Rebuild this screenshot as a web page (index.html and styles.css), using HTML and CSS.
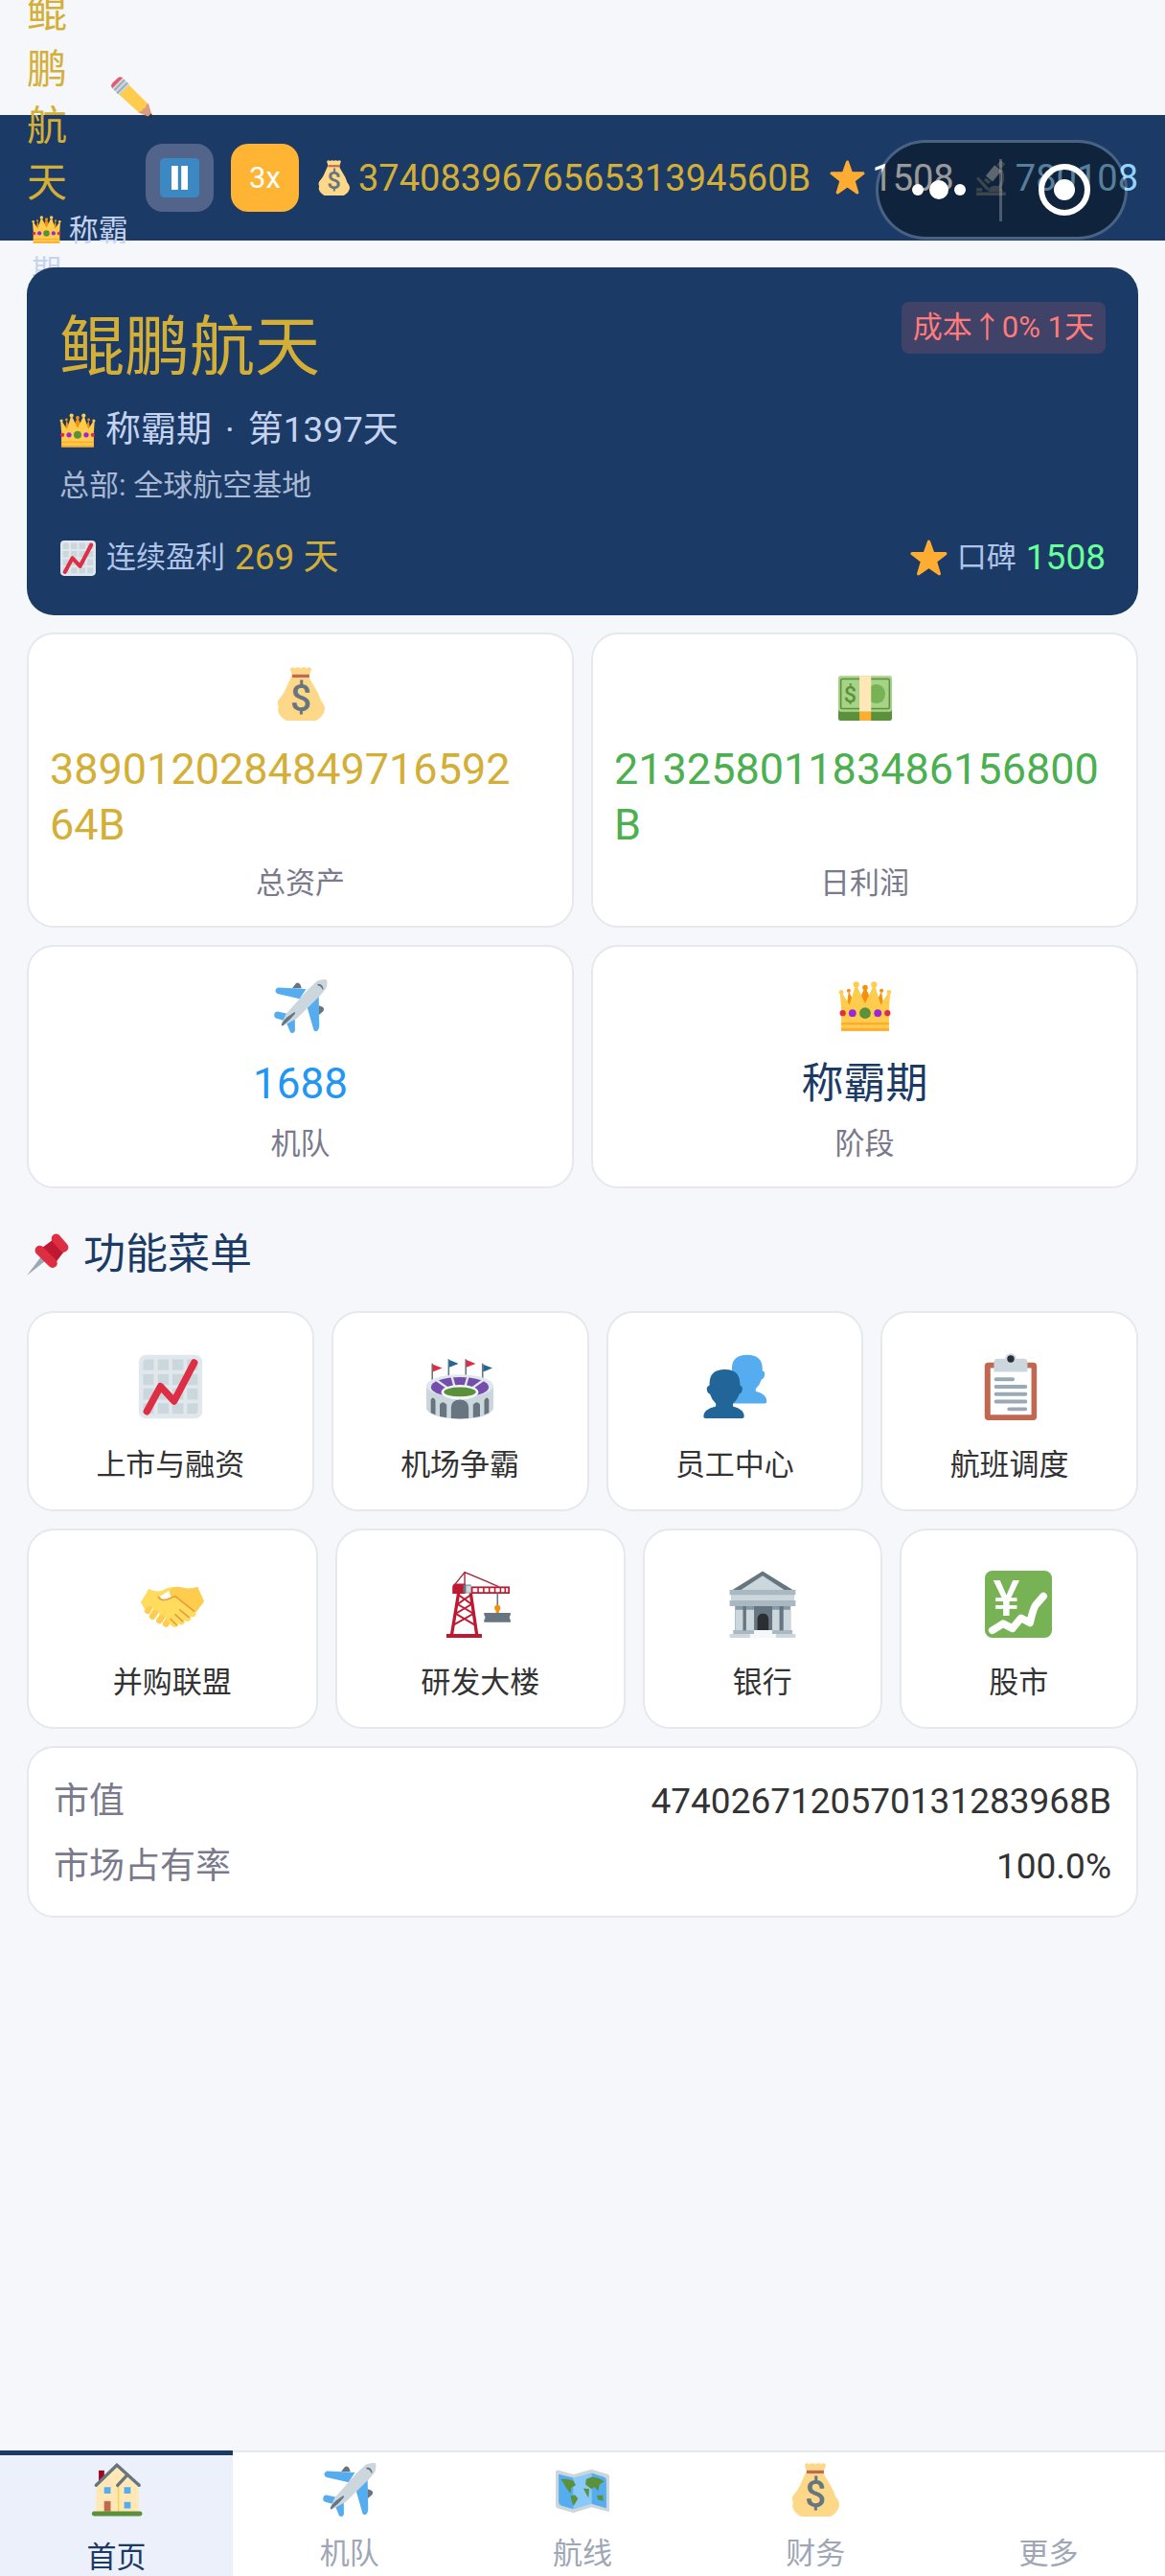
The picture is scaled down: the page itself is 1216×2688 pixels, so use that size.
FILE: index.html
```html
<!DOCTYPE html>
<html lang="zh-CN">
<head>
    <meta charset="UTF-8">
    <meta name="viewport" content="width=device-width, initial-scale=1.0">
    <title>鲲鹏航天</title>
    <link rel="stylesheet" href="styles.css">
</head>
<body>

    <!-- Icon sprite -->
    <svg class="sprite" aria-hidden="true">
        <symbol id="i-bag" viewBox="0 0 36 36">
            <path fill="#fdd888" d="M12 5.5 10.8 1.2Q12.5-.6 14 .9 16-.5 18 .8 20-.5 22 .9q1.5-1.5 3.2.3L23.8 5.5v2l5.5 9.5q1.4 3 2.2 5.5 3.5 4 2.3 7-1 4-5.8 6.5H8.200Q3 33 2.700 29q0-1.5.4-2.5-1.7-3.5 1.100-6Q6.5 18 8 14.5z"/>
            <path fill="#bf6952" d="M12.2 5h11.5v2.1H12.2z"/>
            <text class="glyph-bag" x="18" y="29.5">$</text>
        </symbol>
        <symbol id="i-star" viewBox="0 0 36 36">
            <path fill="#ffac33" stroke="#ffac33" stroke-width="3" stroke-linejoin="round" d="m18 2 4 11.5h12l-9.6 7.5 3.6 12L18 26 8 33l3.6-12L2 13.5h12z"/>
        </symbol>
        <symbol id="i-crown" viewBox="0 0 36 36">
            <path fill="#f4900c" d="m5 22 2-14 5 10 6-13 6 13 5-10 2 14z"/>
            <circle cx="7" cy="7.5" r="1.3" fill="#f4900c"/>
            <circle cx="18" cy="5.5" r="1.8" fill="#f4900c"/>
            <circle cx="29" cy="7.5" r="1.3" fill="#f4900c"/>
            <path fill="#ffcc4d" d="M2 34.5V20L1.2 9.5h1.6L7.5 17 11.2 5h1.6L18 16l5.2-11h1.6L28.5 17l4.7-7.5h1.6L34 20v14.5z"/>
            <circle cx="2" cy="8.5" r="1.5" fill="#ffcc4d"/>
            <circle cx="12" cy="3.5" r="2" fill="#ffcc4d"/>
            <circle cx="24" cy="3.5" r="2" fill="#ffcc4d"/>
            <circle cx="34" cy="8.5" r="1.5" fill="#ffcc4d"/>
            <path fill="#ffac33" d="M2 29h32v1.5H2zM2 32.6h32v2H2z"/>
            <circle cx="3" cy="22.6" r="2" fill="#dd2e44"/>
            <circle cx="33" cy="22.6" r="2" fill="#dd2e44"/>
            <circle cx="9.5" cy="22.6" r="2.5" fill="#9c26d8"/>
            <circle cx="26.5" cy="22.6" r="2.5" fill="#9c26d8"/>
            <circle cx="18" cy="22.6" r="3.8" fill="#5c913b"/>
        </symbol>
        <symbol id="i-chart" viewBox="-1 -1 38 38">
            <rect width="36" height="36" rx="4" fill="#e1e8ed"/>
            <path fill="#ccd6dd" d="M2.5 4.5q0-2 2-2h4v6.2h-6zM10.8 2.5h6.2v6.2h-6.2zM19 2.5h6.3v6.2H19zM27.4 2.5h4q2 0 2 2v4.2h-6zM2.5 10.8h6V17h-6zM10.8 10.8H17V17h-6.2zM19 10.8h6.3V17H19zM27.4 10.8h6V17h-6zM2.5 19h6v6.3h-6zM10.8 19H17v6.3h-6.2zM19 19h6.3v6.3H19zM27.4 19h6v6.3h-6zM2.5 27.4h6v6h-4q-2 0-2-2zM10.8 27.4H17v6h-6.2zM19 27.4h6.3v6H19zM27.4 27.4h6v4q0 2-2 2h-4z"/>
            <path fill="none" stroke="#dd2e44" stroke-width="4" stroke-linecap="round" stroke-linejoin="round" d="M4.6 32 12.3 17.8l7.7 8.4L31.4 4.4"/>
        </symbol>
        <symbol id="i-plane" viewBox="0 0 36 36">
            <path fill="#66757f" d="m12.2 6 2.5-3.2q1.5-1.3 3 .7l.8 2.5zM30 17.5l2.3.8q2 1.2.7 3L30 24z"/>
            <path fill="#55acee" d="M1 8q-.2-2 2-2.600l18.500 1-4.3 6.6L2.5 9.6Q1.2 9.200 1 8zM30 11l.4 20q-.2 3-1.8 3.700-1.6.2-2-1l-4.3-15zM.1 24q.2-2.4 2.3-2.5l6.5 1.5-2.6 4.5-5-1.5Q0 25.5.1 24zM14 26l.1 8q-.3 1.9-1.9 2-1.2 0-1.6-1.5L8.3 29z"/>
            <path fill="#ccd6dd" d="M29 1q3-1.3 6.3-.9.9 3-.5 6.1l-3.6 4.4L15.5 26 6.2 31.2 4.9 30.3l3-6.8L21.5 8z"/>
            <path fill="#66757f" d="M29.2 3q3.6-.3 4 3.6l-.8.2q-.8-2.6-3.2-2.8zM5 30.8q0-2 3.5-5.3l5-3.5q1.3 0 .4 1.3-3 4-8.3 7.8z"/>
        </symbol>
        <symbol id="i-cash" viewBox="0 0 36 36">
            <path fill="#5c913b" d="M0 26h36v8.5q0 1.5-1.5 1.5h-33Q0 36 0 34.5z"/>
            <rect y="6" width="36" height="24" rx="1.5" fill="#a6d388"/>
            <rect x="1.7" y="8" width="32.6" height="20" rx="1" fill="none" stroke="#5c913b"/>
            <ellipse cx="25.5" cy="18" rx="6" ry="6.5" fill="#77b255"/>
            <text class="glyph-cash" x="8" y="23.5">$</text>
            <path fill="#ffe8b6" d="M14.2 6H22v24h-7.8z"/>
            <path fill="#ffac33" d="M14.2 30H22v6h-7.8z"/>
        </symbol>
        <symbol id="i-pin" viewBox="0 0 36 36">
            <path fill="#99aab5" d="M0 36 12.5 19.5l4 3.5z"/>
            <path fill="#be1931" d="m12 13 12-9 9 10-10 13z"/>
            <path fill="none" stroke="#dd2e44" stroke-width="8" stroke-linecap="round" d="m25 4.5 6.5 7.5M11 14.5l11 11"/>
        </symbol>
        <symbol id="i-pencil" viewBox="0 0 36 36">
            <path fill="#ffcc4d" d="m14 6 17.8 17.5L34 31l-10.5-.5L6 14.5z"/>
            <path fill="#d99e82" d="m31.8 22.8 3.7 12.5-12.3-4.6q1-1.3 3-1.5.5-2.3 3-2.7.3-2.6 2.600-3.700z"/>
            <path fill="#292f33" d="m34.5 31.5 1.3 4.3-4.3-1.4q1-2 3-2.9z"/>
            <path fill="#ea596e" d="M1.2 10Q-1 8 1 5.5L5.500 1.2Q8-.8 10 1.2z"/>
            <path fill="#ccd6dd" d="m9.8 1 5.900 5.800-9 9L1 10z"/>
            <path stroke="#99aab5" stroke-width="1.4" d="M11.5 2.8 2.7 11.5M14 5.2l-9 9"/>
        </symbol>
        <symbol id="i-pause" viewBox="0 0 36 36">
            <rect width="36" height="36" rx="4" fill="#3b88c3"/>
            <path fill="#fff" d="M10.5 7h6v22h-6zM19.5 7h6v22h-6z"/>
        </symbol>
        <symbol id="i-scope" viewBox="0 0 36 36">
            <path fill="none" stroke="#66757f" stroke-width="3" d="M28 10q5 10-3 20M4 18l11 12"/>
            <path fill="#66757f" d="M3 32.5h30V36H3zM3 28.5h6v3H3zM15 32q1-6 7-6 7 0 8 6z"/>
            <path stroke="#99aab5" stroke-width="9" d="m16 19 9-11"/>
            <path stroke="#66757f" stroke-width="6" d="m26 7 4-5M15 20l-2 2.5"/>
        </symbol>
        <symbol id="i-stadium" viewBox="0 0 36 36">
            <path stroke="#66757f" stroke-width=".8" d="M3.2 5.5V15M12 3.2V13M21.2 3.2V13M30.2 5.5V15"/>
            <path fill="#dd2e44" d="m3.5 6 5 2-5 2zM21.5 3.6l5 2-5 2z"/>
            <path fill="#226699" d="m12.3 3.6 5 2-5 2zM30.5 6l5 2-5 2z"/>
            <path fill="#ccd6dd" d="M0 17.5h36V30q-3 5.2-18 5.2T0 30z"/>
            <ellipse cx="18" cy="17.5" rx="18" ry="6" fill="#e1e8ed"/>
            <ellipse cx="18" cy="18.2" rx="15.5" ry="5.4" fill="#744eaa"/>
            <path stroke="#e1e8ed" stroke-width="1.2" d="m5.5 14.5 7 5M13.5 12l2 7M22.5 12l-2 7M30.5 14.5l-7 5"/>
            <ellipse cx="18" cy="21" rx="10" ry="4" fill="#f5f8fa"/>
            <ellipse cx="18" cy="20.8" rx="8.6" ry="2.5" fill="#5c913b"/>
            <path fill="#66757f" d="M13.3 35v-6q.4-4 4.7-4t4.7 4v6q-4.7.5-9.4 0zM7.2 34v-6.5q1.8-2.5 3.7.2v6.9zM25.1 34.6v-6.9q1.9-2.7 3.7-.2V34zM2.4 32v-7q1.2-2.2 2.5.3v7.8zM31.1 33.1v-7.8q1.3-2.5 2.5-.3v7z"/>
        </symbol>
        <symbol id="i-people" viewBox="0 0 36 36">
            <path fill="#55acee" d="M16.4 8.5q0-7.6 8.2-7.6t8.2 7.6v1q1.6.3 1.2 2.2-.3 2-1.6 2.3-1 3-3.2 5.2v1.3q6 1.5 5.900 5.500 0 1-1 1H16z"/>
            <path fill="#226699" d="M4.4 16.3q0-7.6 8.2-7.6t8.2 7.6v1q1.6.3 1.2 2.4-.3 2-1.6 2.1-1 3.2-3.4 5.2v1.5q6 1.5 6 5.5 0 1-1 1H2.2q-1 0-1-1 0-4 6.6-5.5V27q-2.2-2-3.2-5.2-1.3-.1-1.6-2.1-.3-2.1 1.4-2.4z"/>
        </symbol>
        <symbol id="i-clipboard" viewBox="0 0 36 36">
            <rect x="4.5" y="5" width="28" height="31" rx="2" fill="#bf6952"/>
            <path fill="#fff" d="M7.6 8h22v25h-22z"/>
            <circle cx="18.5" cy="3" r="2.9" fill="#ccd6dd"/>
            <path fill="#ccd6dd" d="M9.5 10V5q0-2 2-2h14q2 0 2 2v5z"/>
            <circle cx="18.5" cy="3.1" r="1.9" fill="#292f33"/>
            <path stroke="#99aab5" stroke-width="2" stroke-linecap="round" d="M10.6 14h9M10.6 18h15.8M10.6 22h15.8M10.6 26h15.8M17.6 30h8.8"/>
        </symbol>
        <symbol id="i-hands" viewBox="0 0 36 36">
            <path fill="#ffcc4d" d="M16 10q3-2 6-1.2 5 1.4 9.5-.2L35 16.5l-4.500 6L20 24z"/>
            <g stroke="#ffcc4d" stroke-width="3.4" stroke-linecap="round"><path d="m6 19-1.3 2.5M9.5 21l-2.2 3.5M13 24l-2 2.8M16 26.5l-1.5 2"/></g>
            <path fill="#ffdc5d" d="M5.3 9.8q4 2 7.5.7 3.5-1.8 6.5-1.7l-8 5q.8 2.6 4.5 1.6l4-1.700 10 8q1.5 1.5.3 2.7-1.2 1-2.5 0 .8 1.8-.6 2.6-1.4.6-2.7-.4.7 1.7-.8 2.3-1.4.5-2.6-.6.3 1.8-1.2 2-2 .2-3.2-2.2L14 25q-1-2-3-1.5-.5-2.5-3-2.5-.3-2-2.5-2L3 20.5 1 17z"/>
            <path fill="none" stroke="#e39b3c" stroke-width=".8" stroke-linecap="round" d="M10.5 14q1 2.5 5 1.3l4-1.6 10 8M22 21l4.8 4M19.5 23.5l4 3.7M17 26l3.3 3.2"/>
        </symbol>
        <symbol id="i-crane" viewBox="0 0 36 36">
            <path fill="none" stroke="#a0283c" stroke-width=".7" d="M4 8 9.8.8 28 8.5M9.8.8V8"/>
            <path fill="none" stroke="#be1931" stroke-width="1.7" d="M6.5 12 2.8 34.5M13 12l3.3 22.5"/>
            <path fill="none" stroke="#be1931" d="m6.5 13 7 5-8.5 5 10 6M13 13l-7 5 8.5 5-10.500 6"/>
            <path fill="#be1931" d="M0 34h19v2H0zM3.2 9q0-2 2-2h5v5.4h-7z"/>
            <path fill="#66757f" d="M9 7.5h4.2V12H9z"/>
            <path fill="#ccd6dd" d="M10.5 8h2.7v3.7h-2.7z"/>
            <rect x="13.7" y="8.9" width="19.8" height="3" fill="#fff" stroke="#be1931" stroke-width=".9"/>
            <path stroke="#be1931" stroke-width=".8" d="M17 9v3M20 9v3M23 9v3M26 9v3M29 9v3M31.5 9v3"/>
            <path stroke="#66757f" stroke-width=".8" d="M27.4 12v7"/>
            <circle cx="27.4" cy="20" r="1.6" fill="#f4900c"/>
            <path fill="#f4900c" d="M26.6 20h1.6v3h-1.6z"/>
            <path fill="#66757f" d="M20.2 22.6h14.2v1.2l-.5.6v1.4l.5.6v1.2H20.2v-1.2l.5-.6v-1.4l-.5-.6z"/>
        </symbol>
        <symbol id="i-bank" viewBox="0 0 36 36">
            <path fill="#66757f" d="M18 .3 35 10.8H1z"/>
            <path fill="#ccd6dd" d="m18 2.7 12 7.8H6zM1 12.8h34V16H1z"/>
            <path fill="#aab8c2" d="M.3 10.3h35.4V13H.3zM.3 16h35.4v3H.3zM2.2 31.9h31.8V34H2.2z"/>
            <path fill="#8899a6" d="M3.2 19h29.8v13H3.2z"/>
            <path fill="#66757f" d="M7.4 19h1.8v13H7.4zM13.4 19h9.8v13h-9.8zM27 19h2.2v13H27z"/>
            <path fill="#ccd6dd" d="M3.4 21h4v11h-4zM9.2 21h4.2v11H9.2zM23.2 21H27v11h-3.8zM29.2 21h4v11h-4zM.3 34h35.4v2H.3z"/>
            <path fill="#292f33" d="M15.2 32v-6q.2-3 3-3t3 3v6z"/>
            <path fill="#f5f8fa" d="M13.4 31.9h9.8V34h2v2H11.2v-2h2.2z"/>
        </symbol>
        <symbol id="i-stock" viewBox="0 0 36 36">
            <rect width="36" height="36" rx="4" fill="#77b255"/>
            <text class="glyph-stock" x="11.5" y="24">¥</text>
            <path fill="none" stroke="#fff" stroke-width="4" stroke-linecap="round" stroke-linejoin="round" d="m4 32 5.8-3.6 5 2.6 4.6-5.6 4.8 2.6q1.5-7 3-9.5l4.2-4.8"/>
        </symbol>
        <symbol id="i-house" viewBox="0 0 36 37">
            <path fill="#a0041e" d="M5.5 5.2h3.8v7H5.5z"/>
            <path fill="#ffe8b6" d="M3.7 15.5 18 2l15 13.5V34H3.7z"/>
            <path fill="#ffcc4d" d="M18.6 16h1v17.5h-1z"/>
            <path fill="#55acee" d="M9.2 16.7h4.5v4.5H9.2zM23 16.7h4.5v4.5H23zM23 27h4.5v4.4H23z"/>
            <path fill="#c1694f" d="M9.2 26.3h4.5v7.2H9.2z"/>
            <path fill="none" stroke="#66757f" stroke-width="2.2" stroke-linecap="round" d="M3.7 15.4 18 1.5l15.3 13.9M25 8.5l-6.5 7"/>
            <rect x=".7" y="33.4" width="34.8" height="3.2" rx="1.6" fill="#5c913b"/>
        </symbol>
        <symbol id="i-map" viewBox="0 0 36 36">
            <path fill="#ccd6dd" d="m0 5.5 1.5-.7L12 7.7l12-3.4 11 3.2q1 .3 1 1.5v23q0 1-1 .7l-11-3-12 3.7L1.5 30.5Q0 30 0 28.6z"/>
            <path fill="#55acee" d="M2 7.5 12 10v21L4 28.8Q2 28 2 26.5zM24 6.8l8 2.5q2 .6 2 2.5v18.5l-10-2.8z"/>
            <path fill="#88c9f9" d="m12 10 12-3.2v20.7L12 31z"/>
            <path fill="#5c913b" d="M3.5 11q4-.8 8.5 1l1.5 3-3 1.5-.5 4-2.8-3.5-1.7-3zM10 22l3-.5 2 2.5-3 5-1.2-3zM20.5 11 24 9.5q5 0 8.5 3l-3 2-1 4.5-2.5-3-2 1.5-4-3zM18.5 17l4 .5-.5 6-2-3.5zM27.5 22l4-.5.5 4-3.5-.7z"/>
        </symbol>
    </svg>

    <!-- Top status bar -->
    <header class="topbar">
        <div class="brand">
            <div class="brand-row">
                <span class="brand-name">鲲鹏航天</span>
                <button class="brand-edit" type="button" aria-label="edit"><svg><use href="#i-pencil"/></svg></button>
            </div>
            <p class="brand-stage"><svg><use href="#i-crown"/></svg> 称霸期</p>
        </div>
        <button class="speed pause" type="button" aria-label="pause"><svg><use href="#i-pause"/></svg></button>
        <button class="speed fast" type="button">3x</button>
        <div class="resources">
            <span class="res gold"><svg><use href="#i-bag"/></svg>374083967656531394560B</span>
            <span class="res"><svg><use href="#i-star"/></svg>1508</span>
            <span class="res sky"><svg><use href="#i-scope"/></svg>780108</span>
        </div>

        <!-- Floating capsule over the bar -->
        <div class="capsule">
            <button type="button" aria-label="more">
                <svg class="dots" viewBox="0 0 56 24"><circle cx="6" cy="12" r="6"/><circle cx="28" cy="12" r="10"/><circle cx="50" cy="12" r="6"/></svg>
            </button>
            <button type="button" aria-label="close">
                <svg class="ring" viewBox="0 0 54 54"><circle cx="27" cy="27" r="24" fill="none" stroke="#fff" stroke-width="6"/><circle cx="27" cy="27" r="11"/></svg>
            </button>
        </div>
    </header>

    <main class="page">
        <section class="overview">
            <span class="cost">成本↑0% 1天</span>
            <h1>鲲鹏航天</h1>
            <p class="stage"><svg><use href="#i-crown"/></svg>称霸期 <span class="dot">·</span> 第1397天</p>
            <p class="base">总部: 全球航空基地</p>
            <div class="summary">
                <span class="summary-item"><svg><use href="#i-chart"/></svg>连续盈利 <b class="gold">269 天</b></span>
                <span class="summary-item"><svg><use href="#i-star"/></svg>口碑 <b class="mint">1508</b></span>
            </div>
        </section>

        <section class="stats">
            <div class="card stat">
                <svg><use href="#i-bag"/></svg>
                <div class="stat-value wide gold">3890120284849716592<br>64B</div>
                <div class="stat-label">总资产</div>
            </div>
            <div class="card stat">
                <svg><use href="#i-cash"/></svg>
                <div class="stat-value wide green">21325801183486156800<br>B</div>
                <div class="stat-label">日利润</div>
            </div>
            <div class="card stat">
                <svg><use href="#i-plane"/></svg>
                <div class="stat-value blue">1688</div>
                <div class="stat-label">机队</div>
            </div>
            <div class="card stat">
                <svg><use href="#i-crown"/></svg>
                <div class="stat-value navy">称霸期</div>
                <div class="stat-label">阶段</div>
            </div>
        </section>

        <h2 class="section-title"><svg><use href="#i-pin"/></svg>功能菜单</h2>

        <div class="menu">
            <div class="menu-row">
                <button class="card menu-item" type="button"><svg><use href="#i-chart"/></svg>上市与融资</button>
                <button class="card menu-item" type="button"><svg><use href="#i-stadium"/></svg>机场争霸</button>
                <button class="card menu-item" type="button"><svg><use href="#i-people"/></svg>员工中心</button>
                <button class="card menu-item" type="button"><svg><use href="#i-clipboard"/></svg>航班调度</button>
            </div>
            <div class="menu-row">
                <button class="card menu-item" type="button"><svg><use href="#i-hands"/></svg>并购联盟</button>
                <button class="card menu-item" type="button"><svg><use href="#i-crane"/></svg>研发大楼</button>
                <button class="card menu-item" type="button"><svg><use href="#i-bank"/></svg>银行</button>
                <button class="card menu-item" type="button"><svg><use href="#i-stock"/></svg>股市</button>
            </div>
        </div>

        <dl class="card market">
            <div><dt>市值</dt><dd>4740267120570131283968B</dd></div>
            <div><dt>市场占有率</dt><dd>100.0%</dd></div>
        </dl>
    </main>

    <!-- Bottom tabs -->
    <nav class="tabs">
        <a class="tab active" href="#"><svg><use href="#i-house"/></svg>首页</a>
        <a class="tab" href="#"><svg><use href="#i-plane"/></svg>机队</a>
        <a class="tab" href="#"><svg><use href="#i-map"/></svg>航线</a>
        <a class="tab" href="#"><svg><use href="#i-bag"/></svg>财务</a>
        <a class="tab" href="#"><svg></svg>更多</a>
    </nav>

</body>
</html>
```
FILE: styles.css
```css
/* Basic styling */
* {
    box-sizing: border-box;
}
body {
    font-family: Roboto, "Noto Sans CJK SC", sans-serif;
    font-size: 31px;
    display: flex;
    flex-direction: column;
    min-height: 100vh;
    margin: 0;
    color: #333;
    background-color: #f5f7fb;
}
h1, h2, p, dl, dd {
    margin: 0;
    font-weight: 400;
}
b {
    font-weight: 400;
}
button {
    font: inherit;
    color: inherit;
    padding: 0;
    border: none;
    background: none;
    cursor: pointer;
}
svg {
    display: block;
    flex: none;
}
.sprite {
    display: none;
}

/* Currency signs inside the icons */
.glyph-bag {
    font-size: 25px;
    font-weight: 500;
    text-anchor: middle;
    fill: #67757f;
}
.glyph-cash {
    font-size: 15px;
    font-weight: 500;
    text-anchor: middle;
    fill: #5c913b;
}
.glyph-stock {
    font-size: 27px;
    font-weight: 500;
    text-anchor: middle;
    fill: #fff;
}

/* Colours */
.gold { color: #d4af37; }
.green { color: #4caf50; }
.blue { color: #2196f3; }
.navy { color: #1b3b66; }
.sky { color: #90d5ff; }
.mint { color: #69ff9b; }

/* Top bar */
.topbar {
    position: relative;
    display: flex;
    align-items: center;
    gap: 18px;
    margin-top: 120px;
    padding: 30px 28px 30px 152px;
    background-color: #1b3b66;
    color: #fff;
}
.brand {
    position: absolute;
    top: -136px;
    left: 28px;
    width: 132px;
}
.brand-row {
    display: flex;
    align-items: center;
    justify-content: space-between;
}
.brand-name {
    width: 42px;
    font-size: 42px;
    line-height: 59px;
    color: #d4af37;
}
.brand-edit svg {
    width: 44px;
    height: 44px;
}
.brand-stage {
    width: 112px;
    padding-left: 5px;
    line-height: 42px;
    color: #c5d3ee;
}
.brand-stage svg {
    display: inline-block;
    width: 31px;
    height: 31px;
    vertical-align: -4px;
}
.speed {
    display: flex;
    flex: none;
    align-items: center;
    justify-content: center;
    width: 71px;
    height: 71px;
    border-radius: 18px;
}
.speed svg {
    width: 41px;
    height: 41px;
}
.pause {
    background-color: #53648b;
}
.fast {
    background-color: #ffb433;
}
.resources {
    display: flex;
    flex: 1;
    justify-content: space-between;
    font-size: 38px;
    line-height: 52px;
}
.res {
    display: flex;
    align-items: center;
    gap: 7px;
}
.res svg {
    width: 37px;
    height: 37px;
}

/* Capsule */
.capsule {
    position: absolute;
    top: 26px;
    right: 39px;
    z-index: 2;
    display: flex;
    width: 263px;
    height: 104px;
    border: 3px solid rgba(255, 255, 255, 0.2);
    border-radius: 52px;
    background-color: rgba(0, 0, 0, 0.4);
    background-clip: padding-box;
}
.capsule button {
    display: flex;
    flex: 1;
    align-items: center;
    justify-content: center;
}
.capsule button + button::before {
    content: "";
    width: 3px;
    height: 65px;
    margin-right: 38px;
    background-color: rgba(255, 255, 255, 0.25);
}
.capsule svg {
    fill: #fff;
}
.dots {
    width: 56px;
    height: 24px;
}
.ring {
    width: 54px;
    height: 54px;
    margin-right: 36px;
}

/* Page */
.page {
    flex: 1;
    padding: 28px;
}
.card {
    border: 2px solid #e6e8ed;
    border-radius: 28px;
    background-color: #fff;
}

/* Company overview */
.overview {
    position: relative;
    z-index: 1;
    padding: 36px 34px 34px;
    border-radius: 28px;
    background-color: #1b3b66;
    color: #c5d3f0;
}
.overview h1 {
    font-size: 68px;
    line-height: 96px;
    color: #d4af37;
}
.cost {
    float: right;
    padding: 0 12px;
    line-height: 54px;
    border-radius: 8px;
    background-color: rgba(255, 100, 110, 0.17);
    color: #ff7b7b;
}
.stage {
    display: flex;
    align-items: center;
    margin-top: 12px;
    font-size: 37px;
    line-height: 52px;
}
.stage svg {
    width: 38px;
    height: 38px;
    margin-right: 10px;
}
.dot {
    margin: 0 14px;
}
.base {
    margin-top: 10px;
    line-height: 44px;
    color: #a9b8d3;
}
.summary {
    display: flex;
    justify-content: space-between;
    margin-top: 27px;
    line-height: 52px;
    color: #b0c4ea;
}
.summary-item {
    display: flex;
    align-items: center;
    gap: 10px;
}
.summary-item svg {
    width: 39px;
    height: 39px;
}
.summary-item b {
    font-size: 37px;
}

/* Stat cards */
.stats {
    display: grid;
    grid-template-columns: 1fr 1fr;
    gap: 18px;
    margin-top: 18px;
}
.stat {
    display: flex;
    flex-direction: column;
    align-items: center;
    gap: 10px;
    padding: 22px;
}
.stat svg {
    width: 56px;
    height: 56px;
    margin: 12px 0;
}
.stat-value {
    font-size: 44px;
    line-height: 62px;
}
.stat-value.wide {
    align-self: stretch;
    font-size: 45px;
    line-height: 58px;
}
.stat-label {
    line-height: 44px;
    color: #7a7a8c;
}

/* Function menu */
.section-title {
    display: flex;
    align-items: center;
    gap: 15px;
    margin: 36px 0 26px;
    font-size: 44px;
    line-height: 66px;
    color: #1b3b66;
}
.section-title svg {
    width: 44px;
    height: 44px;
}
.menu {
    display: grid;
    gap: 18px;
}
.menu-row {
    display: flex;
    gap: 18px;
}
.menu-item {
    display: flex;
    flex: 1 1 auto;
    flex-direction: column;
    align-items: center;
    gap: 24px;
    padding: 42px 0 23px;
    line-height: 46px;
}
.menu-item svg {
    width: 70px;
    height: 70px;
}

/* Market rows */
.market {
    margin-top: 18px;
    padding: 22px 26px 17px;
    font-size: 37px;
    line-height: 68px;
}
.market div {
    display: flex;
    justify-content: space-between;
}
.market dt {
    color: #7a7a8c;
}

/* Bottom tabs */
.tabs {
    display: grid;
    grid-template-columns: repeat(5, 1fr);
    border-top: 2px solid #e6e8ed;
    background-color: #fff;
}
.tab {
    display: flex;
    flex-direction: column;
    align-items: center;
    gap: 20px;
    padding: 11px 0 0;
    line-height: 38px;
    color: #a0a6b5;
    text-decoration: none;
}
.tab svg {
    width: 56px;
    height: 56px;
}
.tab.active {
    gap: 24px;
    margin-top: -2px;
    padding-top: 8px;
    border-top: 5px solid #1b3b66;
    background-color: #ebf0fb;
    color: #1b3b66;
}
```
